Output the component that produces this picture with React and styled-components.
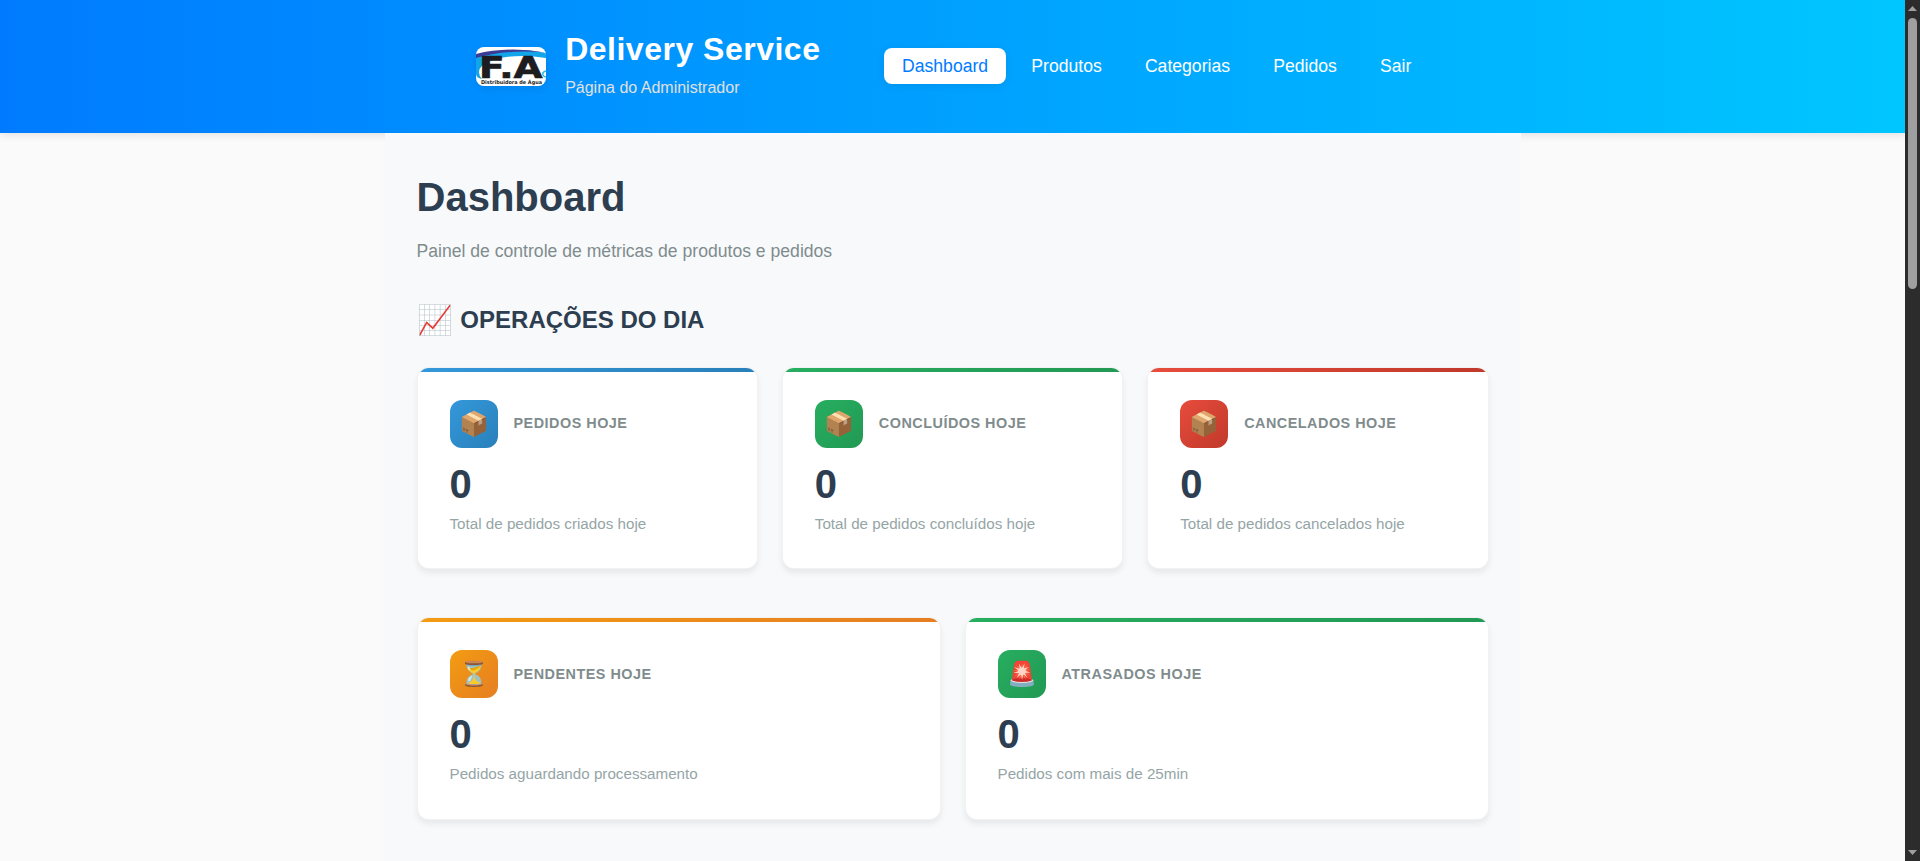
import React from "react";
import styled, { createGlobalStyle } from "styled-components";

const GlobalStyle = createGlobalStyle`
  *, *::before, *::after { box-sizing: border-box; margin: 0; padding: 0; }
  body {
    font-family: "Liberation Sans", Arial, "Noto Color Emoji", sans-serif;
    line-height: 1.6;
    background: #fafafa;
    color: #2c3e50;
    overflow: hidden;
  }
`;

const Viewport = styled.div`
  display: flex;
  height: 100vh;
`;

const Page = styled.div`
  flex: 1;
  min-width: 0;
  display: flex;
  flex-direction: column;
  overflow: hidden;
`;

const Header = styled.header`
  flex: none;
  height: 132.8px;
  display: flex;
  align-items: center;
  justify-content: center;
  gap: 64px;
  background: linear-gradient(90deg, #007bff, #00c6ff);
  box-shadow: 0 2px 8px rgba(0, 0, 0, 0.1);
`;

const Brand = styled.div`
  display: flex;
  align-items: center;
  gap: 19px;
`;

const LogoSvg = styled.svg`
  display: block;
  width: 70px;
  height: 39px;
  border-radius: 8px;
  box-shadow: 0 2px 8px rgba(0, 0, 0, 0.1);
`;

const BrandText = styled.div`
  padding-bottom: 8px;
`;

const BrandName = styled.h1`
  font-size: 32px;
  font-weight: 700;
  letter-spacing: 0.5px;
  color: #fff;
`;

const BrandRole = styled.p`
  font-size: 16px;
  color: #e0e0e0;
`;

const Nav = styled.nav`
  display: flex;
  gap: 8px;
`;

const NavLink = styled.a`
  padding: 4px 17.6px;
  border-radius: 8px;
  font-size: 17.6px;
  color: ${(p) => (p.$active ? "#007bff" : "#fff")};
  background: ${(p) => (p.$active ? "#fff" : "transparent")};
  box-shadow: ${(p) => (p.$active ? "0 2px 8px rgba(0, 0, 0, 0.08)" : "none")};
`;

const Main = styled.main`
  position: relative;
  flex: 1;
  width: 1136px;
  margin: 0 auto;
  padding: 32px;
  background: #f8f9fb;
`;

const PageTitle = styled.h2`
  font-size: 40px;
  font-weight: 700;
  margin-bottom: 8px;
`;

const PageSubtitle = styled.p`
  font-size: 17.6px;
  color: #7f8c8d;
  margin-bottom: 32px;
`;

const SectionTitle = styled.h3`
  display: flex;
  align-items: center;
  gap: 7px;
  padding-left: 1px;
  margin-bottom: 24px;
  font-size: 24px;
  font-weight: 700;
`;

const SectionEmoji = styled.span`
  font-size: 28.8px;
`;

const CardGrid = styled.section`
  display: grid;
  grid-template-columns: repeat(${(p) => p.$columns}, 1fr);
  gap: 24px;
  margin-bottom: 48px;
`;

const Card = styled.article`
  overflow: hidden;
  border: 1px solid rgba(0, 0, 0, 0.05);
  border-radius: 12px;
  background: #fff;
  box-shadow: 0 4px 6px rgba(0, 0, 0, 0.07);
`;

const CardAccent = styled.div`
  height: 4px;
  background: linear-gradient(90deg, ${(p) => p.$from}, ${(p) => p.$to});
`;

const CardBody = styled.div`
  padding: 28px 32px 32px;
`;

const CardHeader = styled.div`
  display: flex;
  align-items: center;
  gap: 16px;
  margin-bottom: 16px;
`;

const CardIcon = styled.div`
  display: flex;
  align-items: center;
  justify-content: center;
  width: 48px;
  height: 48px;
  padding-left: 1px;
  border-radius: 12px;
  font-size: 24px;
  background: linear-gradient(135deg, ${(p) => p.$from}, ${(p) => p.$to});
`;

const CardLabel = styled.h4`
  font-size: 14.4px;
  font-weight: 700;
  letter-spacing: 0.5px;
  color: #7f8c8d;
`;

const CardValue = styled.div`
  font-size: 40px;
  font-weight: 700;
  line-height: 1;
  margin-bottom: 8px;
`;

const CardNote = styled.p`
  font-size: 15.2px;
  color: #95a5a6;
`;

const Scrollbar = styled.div`
  flex: none;
  width: 15px;
  display: flex;
  flex-direction: column;
  align-items: center;
  justify-content: space-between;
  padding: 6px 0;
  background: #2c2c2c;
`;

const ScrollTop = styled.div`
  display: flex;
  flex-direction: column;
  align-items: center;
  gap: 7px;
`;

const ScrollThumb = styled.div`
  width: 9px;
  height: 271px;
  border-radius: 5px;
  background: #9f9f9f;
`;

const ScrollArrow = styled.svg`
  display: block;
  width: 9px;
  height: 5px;
  fill: #9f9f9f;
`;

const colors = {
  blue: ["#3498db", "#2980b9"],
  green: ["#27ae60", "#229954"],
  red: ["#e74c3c", "#c0392b"],
  orange: ["#f39c12", "#e67e22"],
};

const rows = [
  [
    { color: "blue", icon: "📦", label: "PEDIDOS HOJE", note: "Total de pedidos criados hoje" },
    { color: "green", icon: "📦", label: "CONCLUÍDOS HOJE", note: "Total de pedidos concluídos hoje" },
    { color: "red", icon: "📦", label: "CANCELADOS HOJE", note: "Total de pedidos cancelados hoje" },
  ],
  [
    { color: "orange", icon: "⏳", label: "PENDENTES HOJE", note: "Pedidos aguardando processamento" },
    { color: "green", icon: "🚨", label: "ATRASADOS HOJE", note: "Pedidos com mais de 25min" },
  ],
];

const navItems = ["Dashboard", "Produtos", "Categorias", "Pedidos", "Sair"];

function Logo() {
  return (
    <LogoSvg viewBox="0 0 70 39">
      <rect width="70" height="39" fill="#fff" />
      <path d="M0 9 Q34 -1 70 6 L70 11 Q40 6 17 13 Q3 18 3 25 Q3 29 6 32 Q0 31 0 27Z" fill="#12a5ea" />
      <path d="M0 7 Q32 -1 69 5.5 Q32 2 0 11Z" fill="#3a3c96" />
      <path d="M70 24 Q66 25 67 28 Q68 30 70 30" fill="none" stroke="#27bde9" strokeWidth="1.5" />
      <g fill="#1d1c20" fontFamily="DejaVu Sans" fontWeight="700">
        <text x="3" y="31" fontSize="30.5" textLength="63.5" lengthAdjust="spacingAndGlyphs" stroke="#1d1c20" strokeWidth="0.7" strokeLinejoin="round">F.A</text>
        <text x="5" y="37.3" fontSize="5.2" textLength="61" lengthAdjust="spacingAndGlyphs">Distribuidora de Água</text>
      </g>
    </LogoSvg>
  );
}

function MetricCard({ color, icon, label, note }) {
  const [from, to] = colors[color];
  return (
    <Card>
      <CardAccent $from={from} $to={to} />
      <CardBody>
        <CardHeader>
          <CardIcon $from={from} $to={to}>{icon}</CardIcon>
          <CardLabel>{label}</CardLabel>
        </CardHeader>
        <CardValue>0</CardValue>
        <CardNote>{note}</CardNote>
      </CardBody>
    </Card>
  );
}

export default function App() {
  return (
    <>
      <GlobalStyle />
      <Viewport>
        <Page>
          <Header>
            <Brand>
              <Logo />
              <BrandText>
                <BrandName>Delivery Service</BrandName>
                <BrandRole>Página do Administrador</BrandRole>
              </BrandText>
            </Brand>
            <Nav>
              {navItems.map((item, i) => (
                <NavLink key={item} $active={i === 0}>{item}</NavLink>
              ))}
            </Nav>
          </Header>
          <Main>
            <PageTitle>Dashboard</PageTitle>
            <PageSubtitle>Painel de controle de métricas de produtos e pedidos</PageSubtitle>
            <SectionTitle>
              <SectionEmoji>📈</SectionEmoji>
              OPERAÇÕES DO DIA
            </SectionTitle>
            {rows.map((cards) => (
              <CardGrid key={cards.length} $columns={cards.length}>
                {cards.map((card) => (
                  <MetricCard key={card.label} {...card} />
                ))}
              </CardGrid>
            ))}
          </Main>
        </Page>
        <Scrollbar>
          <ScrollTop>
            <ScrollArrow viewBox="0 0 9 5"><path d="M4.5 0L9 5H0Z" /></ScrollArrow>
            <ScrollThumb />
          </ScrollTop>
          <ScrollArrow viewBox="0 0 9 5"><path d="M0 0H9L4.5 5Z" /></ScrollArrow>
        </Scrollbar>
      </Viewport>
    </>
  );
}
